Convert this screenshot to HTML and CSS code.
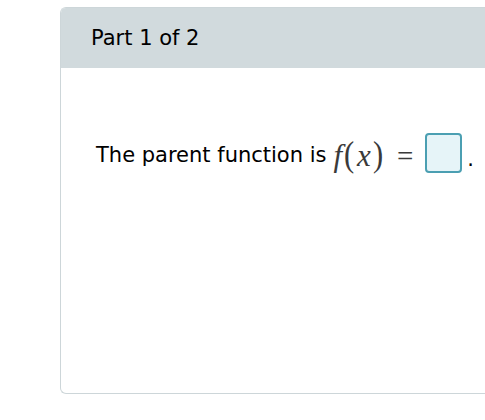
FILE: index.html
```html
<!DOCTYPE html>
<html>
<head>
<meta charset="utf-8">
<link rel="stylesheet" href="styles.css">
</head>
<body>
<div class="card">
  <div class="card-header">Part 1 of 2</div>
  <div class="card-body">
    <p class="question">
      <span class="q-text">The parent function is</span>
      <span class="math"><i class="mi mi-f">f</i><span class="paren">(</span><i class="mi mi-x">x</i><span class="paren">)</span><span class="eq">=</span></span>
      <span class="answer-box"></span><span class="dot">.</span>
    </p>
  </div>
</div>
</body>
</html>
```
FILE: styles.css
```css
html, body {
  margin: 0;
  padding: 0;
  background: #ffffff;
}
body {
  padding: 7px 0 0 60px;
  overflow: hidden;
  font-family: "DejaVu Sans", Verdana, sans-serif;
  color: #000;
}
.card {
  height: 385px;
  border: 1px solid #cdd6d9;
  border-right: none;
  border-radius: 6px 0 0 6px;
  overflow: hidden;
}
.card-header {
  height: 61px;
  background: #d1dadd;
  display: flex;
  align-items: center;
  padding-left: 30px;
  font-size: 21px;
  margin-top: -1px;
}
.card-body {
  padding: 61px 0 0 35px;
}
.question {
  margin: 0;
  display: flex;
  align-items: baseline;
  font-size: 21px;
  height: 44px;
}
.q-text {
  margin-right: 7px;
}
.math {
  font-family: "Liberation Serif", "Times New Roman", serif;
  font-size: 31px;
  color: #3a3a3a;
  display: inline-flex;
  align-items: baseline;
  position: relative;
  top: 4px;
}
.mi {
  font-style: italic;
}
.paren {
  font-size: 36px;
  margin: 0 2px 0 1px;
  transform: scaleX(0.85);
}
.eq {
  font-size: 29px;
  margin: 0 12px 0 11px;
}
.answer-box {
  align-self: flex-start;
  margin-top: 4px;
  width: 33px;
  height: 36px;
  border: 2px solid #4b9fb2;
  border-radius: 4px;
  background: #e6f4f8;
}
.dot {
  margin-left: 5px;
  position: relative;
  top: 4px;
}
```
